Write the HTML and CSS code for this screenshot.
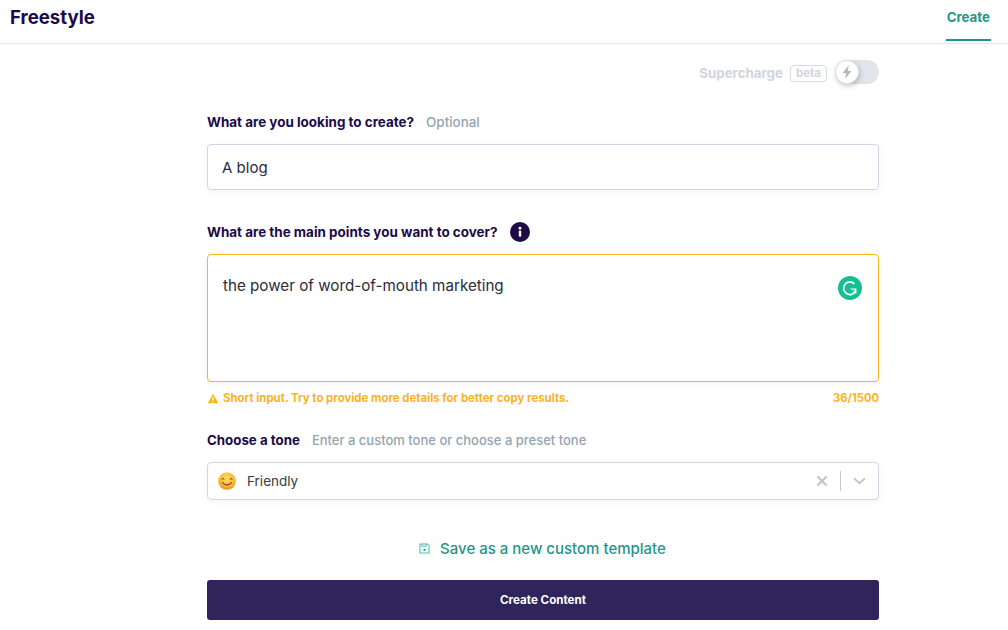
FILE: index.html
```html
<!DOCTYPE html>
<html lang="en">
<head>
<meta charset="utf-8">
<title>Freestyle</title>
<link rel="stylesheet" href="styles.css">
</head>
<body>
<header class="topbar">
  <h1 class="brand">Freestyle</h1>
  <nav class="tabs"><a class="tab">Create</a></nav>
</header>
<main class="form">
  <div class="supercharge">
    <span class="sc-label">Supercharge</span>
    <span class="sc-beta">beta</span>
    <span class="toggle"><span class="knob">
      <svg viewBox="0 0 16 16" width="16" height="16"><path d="M10 1 3.6 9h3.6l-1.2 6 6.4-8H8.6z" fill="#b4b7bd"/></svg>
    </span></span>
  </div>
  <div class="label-row first"><label class="label">What are you looking to create?</label><span class="hint hint-opt">Optional</span></div>
  <div class="input">A blog</div>
  <div class="label-row second"><label class="label">What are the main points you want to cover?</label>
    <span class="info"><svg viewBox="0 0 20 20" width="20" height="20"><circle cx="10" cy="10" r="10" fill="#1b0b47"/><rect x="8.8" y="8.6" width="2.4" height="6" fill="#fff"/><circle cx="10" cy="6.2" r="1.4" fill="#fff"/></svg></span>
  </div>
  <div class="textarea">the power of word-of-mouth marketing
    <svg class="gr" viewBox="0 0 24 24" width="24" height="24"><circle cx="12" cy="12" r="12" fill="#15bf94"/><path d="M16.4 7.8A6.3 6.3 0 1 0 17.6 15" fill="none" stroke="#fff" stroke-width="1.8"/><path d="M12.2 12.4h6.2v5.6z" fill="#fff"/><path d="M13.4 13.4h3v2.6z" fill="#15bf94"/></svg>
  </div>
  <div class="status">
    <span class="warn"><svg viewBox="0 0 12 12" width="12" height="11"><path d="M6 .8 11.8 11.2H.2z" fill="#f9b41f"/><rect x="5.4" y="4.4" width="1.2" height="3.6" fill="#fff"/><rect x="5.4" y="8.8" width="1.2" height="1.2" fill="#fff"/></svg>Short input. Try to provide more details for better copy results.</span>
    <span class="count">36/1500</span>
  </div>
  <div class="label-row third"><label class="label label-tone">Choose a tone</label><span class="hint hint-tone">Enter a custom tone or choose a preset tone</span></div>
  <div class="select">
    <svg class="emoji" viewBox="0 0 18 18" width="18" height="18"><defs><radialGradient id="face" cx="50%" cy="35%" r="65%"><stop offset="0" stop-color="#ffdc6a"/><stop offset=".7" stop-color="#fbb532"/><stop offset="1" stop-color="#ee8a1c"/></radialGradient></defs><circle cx="9" cy="9" r="8.8" fill="url(#face)"/><path d="M3.6 7.4q1.4-1.8 2.8 0M11.6 7.4q1.4-1.8 2.8 0" fill="none" stroke="#6b3a12" stroke-width="1"/><path d="M4.2 10.4q4.8 4.8 9.6 0" fill="none" stroke="#7a3f12" stroke-width="1.1"/></svg>
    <span class="select-value">Friendly</span>
    <svg class="clear" viewBox="0 0 12 12" width="12" height="12"><path d="M1.5 1.5l9 9M10.5 1.5l-9 9" stroke="#c4c6c9" stroke-width="2.4"/></svg>
    <span class="sep"></span>
    <svg class="chev" viewBox="0 0 14 8" width="13" height="8"><path d="M1 1l6 5.4L13 1" fill="none" stroke="#c4c6c9" stroke-width="2"/></svg>
  </div>
  <a class="save"><svg viewBox="0 0 12 12" width="11" height="11"><path d="M1 1h8l2 2v8H1z" fill="none" stroke="#4cbcb4" stroke-width="1.1"/><path d="M3.2 1v2.6h4.6V1" fill="none" stroke="#4cbcb4" stroke-width="1"/><circle cx="6" cy="7.6" r="1.2" fill="#1f9688"/></svg>Save as a new custom template</a>
  <button class="submit">Create Content</button>
</main>
</body>
</html>
```
FILE: styles.css
```css
* { box-sizing: border-box; }
html, body { margin: 0; height: 100%; }
body {
  background: #fff;
  font-family: "Inter", "Noto Sans", sans-serif;
  color: #2a2d3a;
  overflow: hidden;
}
.topbar {
  height: 44px;
  display: flex;
  justify-content: space-between;
  border-bottom: 1px solid #e3ebe7;
  padding: 0 17px 0 10px;
}
.brand {
  margin: 0;
  font-size: 18.6px;
  line-height: 35px;
  font-weight: 700;
  color: #1b0b47;
}
.tabs { display: flex; }
.tab {
  height: 41px;
  padding: 9px 1px 0;
  font-size: 13.3px;
  line-height: 17px;
  font-weight: 700;
  color: #1f9688;
  border-bottom: 2px solid #1f9688;
}
.form {
  width: 672px;
  margin-left: 207px;
  display: flex;
  flex-direction: column;
}
.supercharge {
  display: flex;
  align-items: center;
  justify-content: flex-end;
  height: 26px;
  margin-top: 16px;
  color: #d1d5dd;
  font-weight: 700;
  font-size: 13.3px;
}
.sc-beta {
  margin-left: 7px;
  border: 1.5px solid #d8dbe2;
  border-radius: 4px;
  font-size: 11.5px;
  line-height: 14px;
  height: 17px;
  padding: 0 5px;
}
.toggle {
  margin-left: 8px;
  margin-bottom: 2px;
  width: 44px;
  height: 24px;
  border-radius: 12px;
  background: #e3e5ea;
  display: flex;
}
.knob {
  width: 24px;
  height: 24px;
  border-radius: 50%;
  background: #fff;
  border: 1px solid #e0e2e6;
  box-shadow: 1px 2px 5px rgba(40, 40, 60, .25);
  display: flex;
  align-items: center;
  justify-content: center;
}
.label-row {
  display: flex;
  align-items: center;
  height: 20px;
}
.first { margin-top: 26px; }
.second { margin-top: 32px; }
.third { margin-top: 24px; }
.label {
  font-size: 13.45px;
  font-weight: 700;
  color: #1b0b47;
}
.label-tone { font-size: 13.3px; }
.hint { font-weight: 500; color: #93a5b1; }
.hint-opt { margin-left: 12px; font-size: 13.4px; }
.hint-tone { margin-left: 12px; font-size: 13px; }
.info { margin-left: 12px; height: 20px; }
.input {
  margin-top: 12px;
  height: 46px;
  border: 1px solid #d5d4e6;
  border-radius: 4px;
  box-shadow: 0 2px 6px rgba(60, 60, 110, .06);
  padding: 0 14px;
  font-size: 15px;
  line-height: 46px;
}
.textarea {
  position: relative;
  margin-top: 12px;
  height: 128px;
  border: 1px solid #f9b41f;
  border-radius: 4px;
  box-shadow: 0 2px 6px rgba(60, 60, 110, .06);
  padding: 21px 15px;
  font-size: 15.2px;
  line-height: 20px;
}
.gr { position: absolute; right: 16px; top: 21px; }
.status {
  display: flex;
  justify-content: space-between;
  align-items: center;
  margin-top: 8px;
  height: 16px;
  font-size: 11.4px;
  font-weight: 700;
  color: #f9b41f;
}
.count { font-size: 11.2px; }
.warn { display: flex; align-items: center; gap: 4px; }
.select {
  margin-top: 12px;
  height: 38px;
  border: 1px solid #d5d4e6;
  border-radius: 4px;
  box-shadow: 0 2px 6px rgba(60, 60, 110, .06);
  display: flex;
  align-items: center;
  padding: 0 12px 0 10px;
  font-size: 13.5px;
}
.select-value { margin-left: 11px; flex: 1; color: #3a3a3c; }
.clear { margin-right: 1px; }
.sep { width: 1px; height: 20px; background: #c9c9c9; margin: 0 12px 0 11px; }
.save {
  align-self: center;
  display: flex;
  align-items: center;
  gap: 10px;
  margin-top: 38px;
  margin-right: 1px;
  height: 20px;
  font-size: 15px;
  font-weight: 500;
  color: #1f9688;
}
.submit {
  margin-top: 22px;
  height: 40px;
  border: 0;
  border-radius: 3px;
  background: #2f245c;
  color: #fff;
  font-family: inherit;
  font-size: 11.6px;
  font-weight: 700;
}
```
